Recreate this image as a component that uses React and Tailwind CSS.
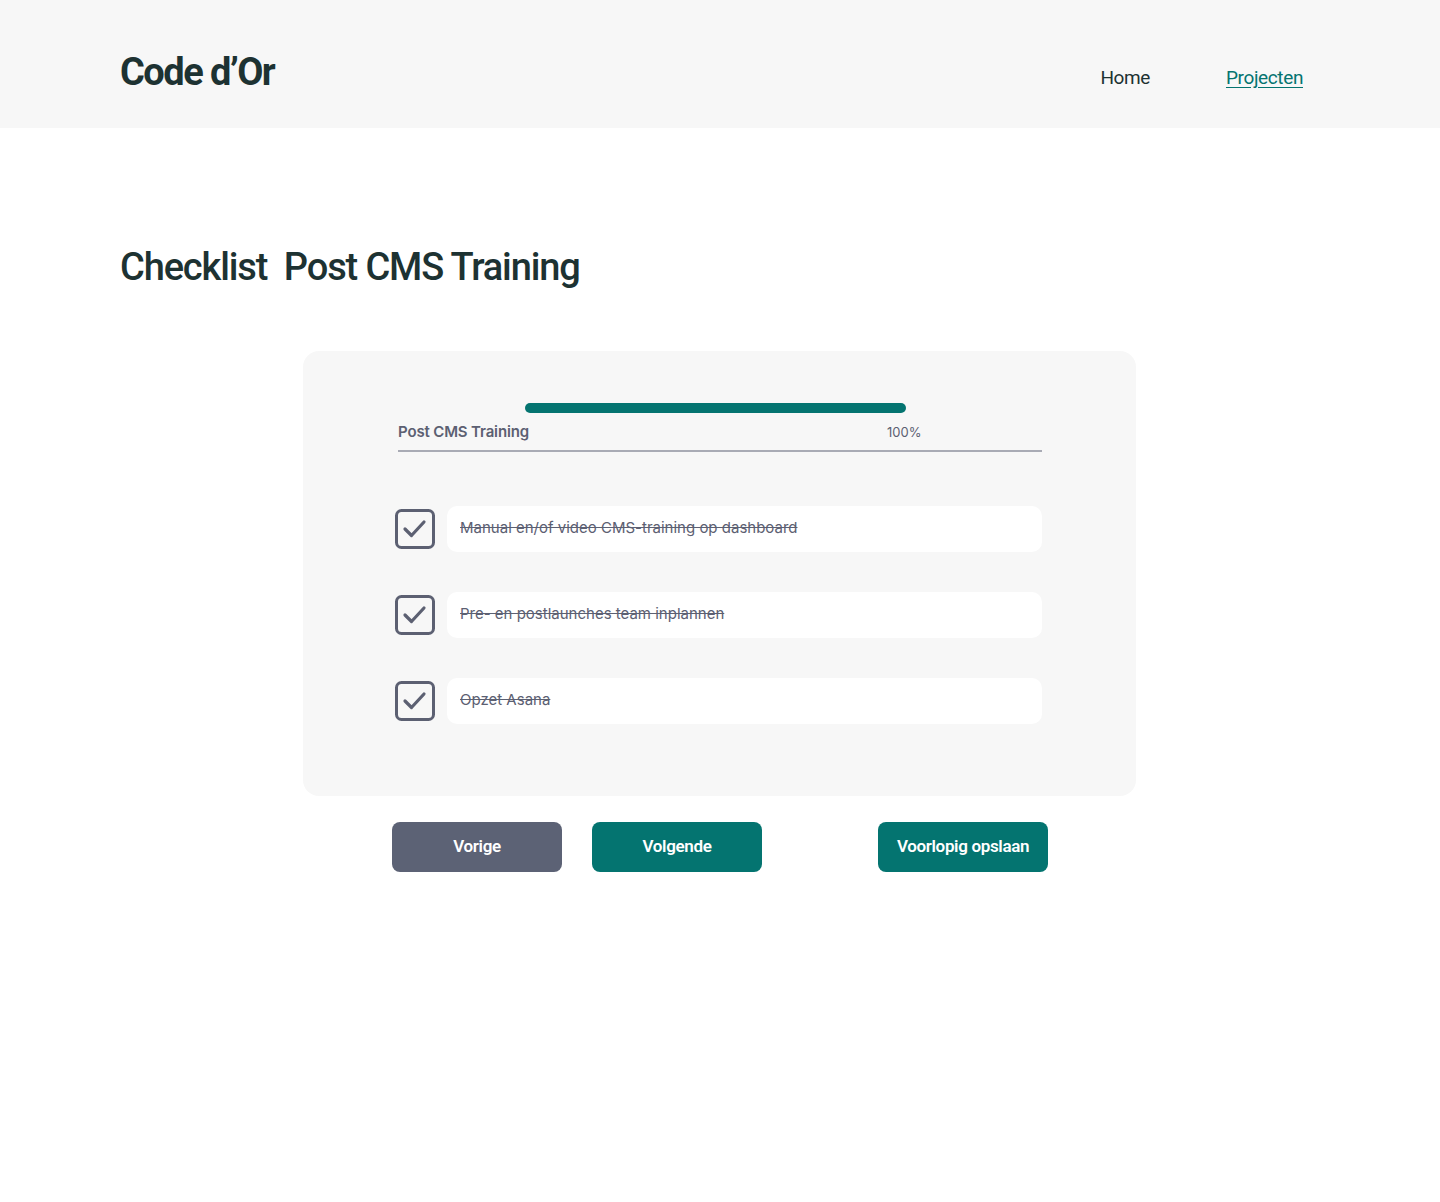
import React from "react";

const items = [
  "Manual en/of video CMS-training op dashboard",
  "Pre- en postlaunches team inplannen",
  "Opzet Asana",
];

function CheckIcon() {
  return (
    <svg width="40" height="40" viewBox="0 0 40 40" fill="none">
      <rect x="1.5" y="1.5" width="37" height="37" rx="5" stroke="#5c6072" strokeWidth="3" />
      <path d="M10 20l6.5 6.5L29 13" stroke="#5c6072" strokeWidth="3.2" strokeLinecap="round" strokeLinejoin="round" />
    </svg>
  );
}

export default function App() {
  return (
    <div className="min-h-[1202px] bg-white font-['Roboto',sans-serif]">
      {/* Header */}
      <header className="flex h-[128px] items-center justify-between bg-[#f7f7f7] pl-[120px] pr-[137px]">
        <h1 className="mt-[16px] text-[38px] font-bold tracking-[-0.04em] text-[#1d3232]">
          Code d’Or
        </h1>
        <nav className="mt-[28px] flex gap-[76px] text-[19px] tracking-[-0.02em]">
          <a className="text-[#1d3232]">Home</a>
          <a className="text-[#047470] underline underline-offset-[3px]">Projecten</a>
        </nav>
      </header>

      <main className="px-[120px] pt-[111px]">
        <h2 className="text-[38px] font-medium tracking-[-0.03em] text-[#1d3232]">
          Checklist&nbsp; Post CMS Training
        </h2>

        <section className="ml-[183px] mt-[55px] w-[833px] rounded-2xl bg-[#f7f7f7] pb-[72px] pl-[92px] pr-[94px] pt-[52px]">
          <div className="ml-[130px] h-[10px] w-[381px] rounded-full bg-[#047470]" />
          <div className="ml-[3px] mt-[8px] flex items-center border-b-2 border-[#a9abb5] pb-[6px] font-['Inter',sans-serif]">
            <span className="w-[489px] text-[15px] font-semibold tracking-[-0.01em] text-[#5c6072]">
              Post CMS Training
            </span>
            <span className="text-[13px] text-[#5c6072]">100%</span>
          </div>

          <div className="mt-[54px] flex flex-col gap-[40px]">
            {items.map((item) => (
              <div key={item} className="flex items-center gap-[12px]">
                <CheckIcon />
                <div className="flex h-[46px] flex-1 items-center rounded-[10px] bg-white px-[13px] font-['Inter',sans-serif] text-[15px] text-[#5c6072] line-through">
                  {item}
                </div>
              </div>
            ))}
          </div>
        </section>

        <div className="ml-[272px] mt-[26px] flex w-[656px] text-[17px] font-semibold tracking-[-0.02em] text-white">
          <button className="h-[50px] w-[170px] rounded-lg bg-[#5c6275]">Vorige</button>
          <button className="ml-[30px] h-[50px] w-[170px] rounded-lg bg-[#047470]">Volgende</button>
          <button className="ml-auto h-[50px] w-[170px] rounded-lg bg-[#047470]">Voorlopig opslaan</button>
        </div>
      </main>
    </div>
  );
}
